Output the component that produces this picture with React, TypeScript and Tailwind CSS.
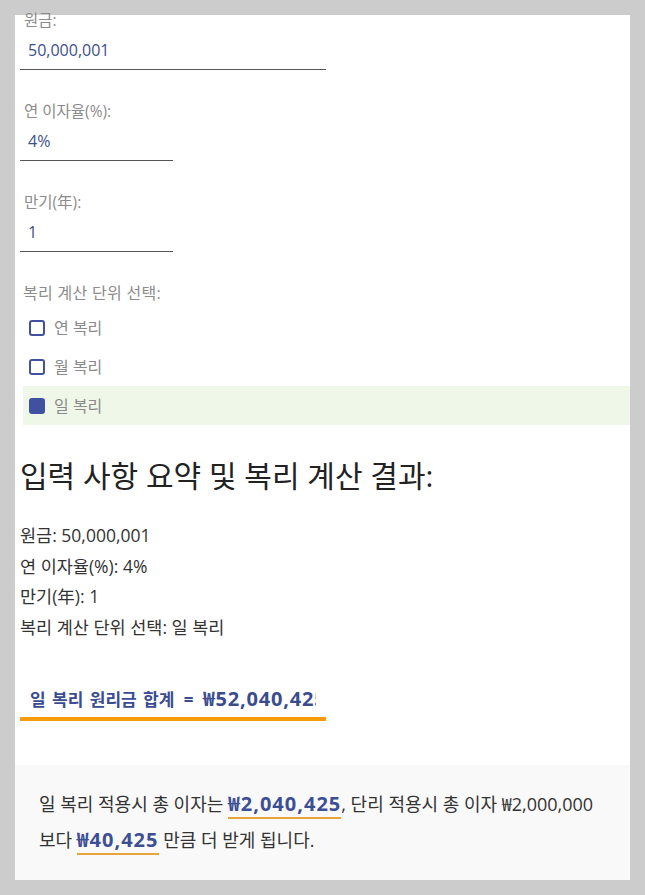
import React from 'react'

const font = { fontFamily: '"Open Sans", "Noto Sans CJK KR", sans-serif' }

function Field({ label, value, wide, first }: { label: string; value: string; wide?: boolean; first?: boolean }) {
  return (
    <div className={first ? '-mt-[5px]' : 'mt-[31px]'}>
      <div className="h-5 pl-1 text-[15.5px] leading-5 text-[#8c8c8c]">{label}</div>
      <div
        className={`flex h-10 items-center border-b border-[#555] pl-2 text-[16px] text-[#3e4f8c] ${
          wide ? 'w-[306px]' : 'w-[153px]'
        }`}
      >
        {value}
      </div>
    </div>
  )
}

function Check({ label, checked }: { label: string; checked?: boolean }) {
  return (
    <div className={`ml-[3px] flex h-[39px] items-center gap-[9px] pl-[6px] ${checked ? 'bg-[#eff7e8]' : ''}`}>
      <span
        className={`h-4 w-4 rounded-[3px] border-2 border-[#3f51a0] ${checked ? 'bg-[#3f51a0]' : 'bg-white'}`}
      />
      <span className="text-[16px] text-[#8a8a8a]">{label}</span>
    </div>
  )
}

export default function App() {
  return (
    <div className="min-h-[895px] bg-[#cccccc] px-[15px] pt-[15px]" style={font}>
      <div className="flex h-[865px] w-[615px] flex-col bg-white">
        <div className="pl-[5px]">
          <Field first label="원금:" value="50,000,001" wide />
          <Field label="연 이자율(%):" value="4%" />
          <Field label="만기(年):" value="1" />

          <div className="mt-[31px] h-5 pl-[3px] text-[16px] leading-5 tracking-[0.3px] text-[#8c8c8c]">
            복리 계산 단위 선택:
          </div>
          <div className="mt-[5px]">
            <Check label="연 복리" />
            <Check label="월 복리" />
            <Check label="일 복리" checked />
          </div>

          <h2 className="mt-[33px] text-[30px] leading-9 text-[#222]">입력 사항 요약 및 복리 계산 결과:</h2>

          <div className="mt-[26px] text-[17.5px] leading-[30.5px] text-[#333]">
            <p>원금: 50,000,001</p>
            <p>연 이자율(%): 4%</p>
            <p>만기(年): 1</p>
            <p>복리 계산 단위 선택: 일 복리</p>
          </div>

          <div className="mt-[43px] w-[306px] border-b-4 border-[#f89c0e] pb-[3px]">
            <div className="mx-[10px] overflow-hidden whitespace-nowrap text-[17px] font-bold leading-7 text-[#3a4c8f] [word-spacing:2px]">
              일 복리 원리금 합계 <span className="px-[3px]">=</span>{' '}
              <span className="text-[20px] tracking-[0.8px]">₩52,040,425</span>
            </div>
          </div>
        </div>

        <div className="mt-auto h-[115px] bg-[#f9f9f9] px-6 pt-[21px] text-[18px] leading-9 text-[#333]">
          일 복리 적용시 총 이자는{' '}
          <span className="border-b-2 border-[#e9a43c] text-[20px] font-bold tracking-[1px] text-[#3d4f94]">
            ₩2,040,425
          </span>
          , 단리 적용시 총 이자 ₩2,000,000
          <br />
          보다{' '}
          <span className="border-b-2 border-[#e9a43c] text-[20px] font-bold tracking-[1px] text-[#3d4f94]">₩40,425</span>{' '}
          만큼 더 받게 됩니다.
        </div>
      </div>
    </div>
  )
}
